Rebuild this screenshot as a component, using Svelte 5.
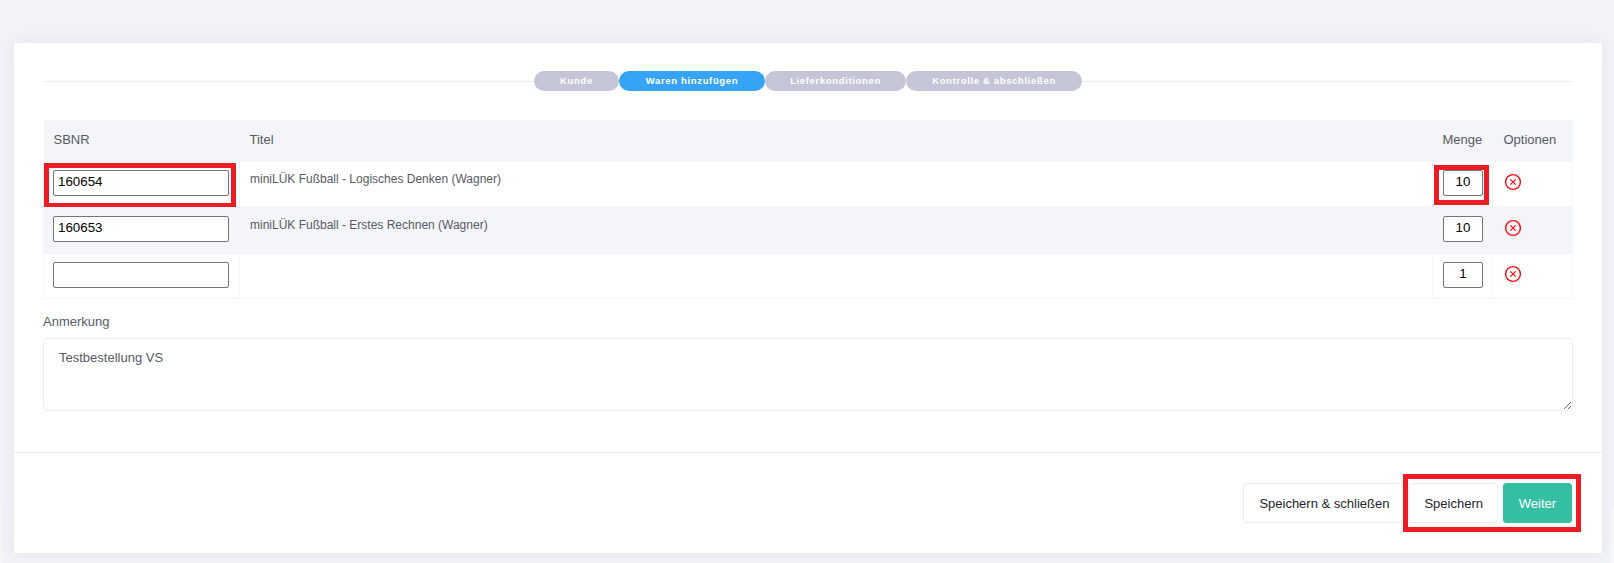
<script>
	const steps = [
		{ label: 'Kunde', width: 85 },
		{ label: 'Waren hinzufügen', width: 146, active: true },
		{ label: 'Lieferkonditionen', width: 141 },
		{ label: 'Kontrolle & abschließen', width: 176 }
	];

	const rows = [
		{ sbnr: '160654', title: 'miniLÜK Fußball - Logisches Denken (Wagner)', qty: '10', marked: true },
		{ sbnr: '160653', title: 'miniLÜK Fußball - Erstes Rechnen (Wagner)', qty: '10' },
		{ sbnr: '', title: '', qty: '1' }
	];
</script>

<div class="page">
	<div class="card">
		<div class="body">
			<div class="stepper">
				{#each steps as step}
					<span class="step" class:active={step.active} style="width: {step.width}px">{step.label}</span>
				{/each}
			</div>

			<table>
				<colgroup>
					<col class="col-sbnr" />
					<col />
					<col class="col-qty" />
					<col class="col-opt" />
				</colgroup>
				<thead>
					<tr>
						<th>SBNR</th>
						<th>Titel</th>
						<th>Menge</th>
						<th class="th-opt">Optionen</th>
					</tr>
				</thead>
				<tbody>
					{#each rows as row}
						<tr>
							<td>
								{#if row.marked}<span class="mark mark-sbnr"></span>{/if}
								<input class="sbnr" type="text" value={row.sbnr} />
							</td>
							<td class="title">{row.title}</td>
							<td>
								{#if row.marked}<span class="mark mark-qty"></span>{/if}
								<input class="qty" type="text" value={row.qty} />
							</td>
							<td>
								<svg class="remove" width="18" height="18" viewBox="0 0 18 18" fill="none" stroke="#f50a0f">
									<circle cx="9" cy="9" r="7.4" stroke-width="1.4" />
									<path d="M6.4 6.4l5.2 5.2M11.6 6.4l-5.2 5.2" stroke-width="1.3" />
								</svg>
							</td>
						</tr>
					{/each}
				</tbody>
			</table>

			<label class="note-label" for="note">Anmerkung</label>
			<textarea id="note" value="Testbestellung VS"></textarea>
		</div>

		<div class="footer">
			<button class="btn">Speichern &amp; schließen</button>
			<button class="btn save">Speichern</button>
			<button class="btn primary">Weiter</button>
			<span class="mark mark-footer"></span>
		</div>
	</div>
</div>

<style>
	:global(body) {
		margin: 0;
		background: #f2f3f8;
		font-family: 'Liberation Sans', Arial, sans-serif;
	}
	.page {
		height: 563px;
		padding: 43px 12px 10px 14px;
		box-sizing: border-box;
		/* the lighter strips at the lower page edges */
		background:
			linear-gradient(#f8f8fb, #f8f8fb) 0 507px / 1px 56px no-repeat,
			linear-gradient(#f8f8fb, #f8f8fb) 100% 507px / 4px 56px no-repeat;
	}
	.card {
		height: 510px;
		background: #fff;
		box-shadow: 0 0 15px rgba(81, 77, 92, 0.09);
		display: flex;
		flex-direction: column;
	}
	.body {
		height: 410px;
		box-sizing: border-box;
		padding: 28px 29px 0;
		border-bottom: 1px solid #ebedf2;
	}
	.stepper {
		height: 20px;
		display: flex;
		justify-content: center;
		background: linear-gradient(#ebedf2, #ebedf2) 0 10px / 100% 1px no-repeat;
	}
	.step {
		height: 20px;
		line-height: 19px;
		border-radius: 10px;
		background: #c4c5d6;
		color: #fff;
		font-size: 9.5px;
		font-weight: 700;
		letter-spacing: 0.65px;
		text-align: center;
	}
	.step.active {
		background: #36a3f7;
	}
	table {
		width: 100%;
		margin-top: 29px;
		border-collapse: collapse;
		table-layout: fixed;
		font-size: 13px;
		color: #575962;
	}
	.col-sbnr {
		width: 196px;
	}
	.col-qty {
		width: 60px;
	}
	.col-opt {
		width: 80px;
	}
	th {
		height: 41px;
		padding: 0 10px 2px;
		box-sizing: border-box;
		background: #f4f5f8;
		font-weight: 400;
		text-align: left;
	}
	.th-opt {
		padding-left: 11px;
		padding-right: 0;
	}
	td {
		position: relative;
		height: 45px;
		padding: 8px 10px 0;
		box-sizing: border-box;
		vertical-align: top;
		border: 1px solid #f4f5f8;
	}
	tbody tr:nth-child(2) td {
		height: 47px;
		padding-top: 9px;
		background: #f4f5f8;
	}
	td:first-child {
		padding-left: 9px;
	}
	td.title {
		font-size: 12px;
		padding-top: 9px;
		line-height: 17px;
	}
	tbody tr:nth-child(2) td.title {
		padding-top: 10px;
	}
	input {
		display: block;
		height: 26px;
		box-sizing: border-box;
		padding: 0 4px 2px;
		border: 1px solid #767676;
		border-radius: 2px;
		background: #fff;
		font: 13.33px 'Liberation Sans', Arial, sans-serif;
		color: #000;
	}
	.sbnr {
		width: 176px;
	}
	.qty {
		width: 40px;
		text-align: center;
	}
	.remove {
		display: block;
		margin-top: 3px;
		margin-left: 1px;
	}
	.note-label {
		display: block;
		margin-top: 15px;
		font-size: 13px;
		line-height: 16px;
		color: #575962;
	}
	textarea {
		display: block;
		width: 100%;
		height: 73px;
		margin-top: 8px;
		box-sizing: border-box;
		padding: 9px 15px;
		border: 1px solid #ebedf2;
		border-radius: 4px;
		font: 13px/19px 'Liberation Sans', Arial, sans-serif;
		color: #575962;
	}
	.footer {
		position: relative;
		display: flex;
		justify-content: flex-end;
		gap: 4px;
		padding: 30px 30px 0;
	}
	.btn {
		height: 40px;
		padding: 0 15px;
		border: 1px solid #ebedf2;
		border-radius: 3px;
		background: #fff;
		font: 13px 'Liberation Sans', Arial, sans-serif;
		color: #212529;
	}
	.btn.save {
		padding: 0 14px;
	}
	.btn.primary {
		width: 69px;
		margin-left: 1px;
		padding: 0;
		background: #34bfa3;
		border-color: #34bfa3;
		color: #fff;
	}
	.mark {
		position: absolute;
		box-sizing: border-box;
		border: 5px solid #ed1c24;
		pointer-events: none;
	}
	.mark-sbnr {
		left: 0;
		top: 1px;
		width: 192px;
		height: 45px;
	}
	.mark-qty {
		left: 1px;
		top: 3px;
		width: 55px;
		height: 40px;
	}
	.mark-footer {
		right: 21px;
		top: 21px;
		width: 178px;
		height: 58px;
	}
</style>
